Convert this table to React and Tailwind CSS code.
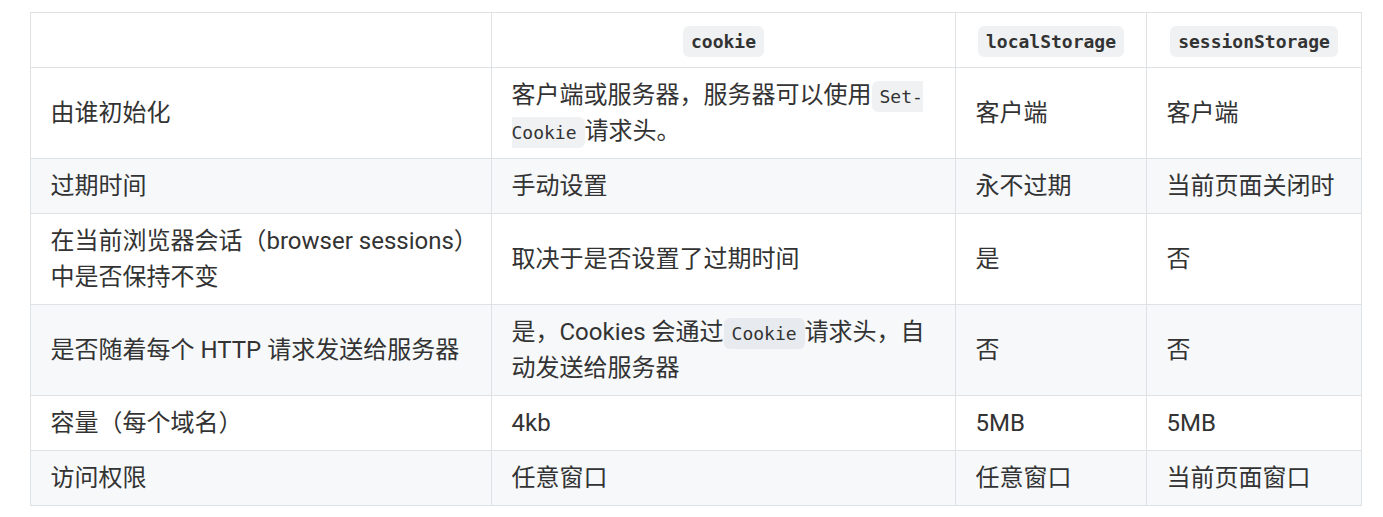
import React from "react";

const C = ({ children, bold }) => (
  <code
    className={`rounded-md bg-[rgba(175,184,193,0.2)] px-[8px] py-[5px] text-[18px] leading-none ${bold ? "font-bold" : "font-normal"}`}
    style={{ fontFamily: '"DejaVu Sans Mono", "Liberation Mono", monospace' }}
  >
    {children}
  </code>
);

const rows = [
  ["由谁初始化", <>客户端或服务器，服务器可以使用<C>Set-Cookie</C>请求头。</>, "客户端", "客户端"],
  ["过期时间", "手动设置", "永不过期", "当前页面关闭时"],
  ["在当前浏览器会话（browser sessions）中是否保持不变", "取决于是否设置了过期时间", "是", "否"],
  ["是否随着每个 HTTP 请求发送给服务器", <>是，Cookies 会通过<C>Cookie</C>请求头，自动发送给服务器</>, "否", "否"],
  ["容量（每个域名）", "4kb", "5MB", "5MB"],
  ["访问权限", "任意窗口", "任意窗口", "当前页面窗口"],
];

export default function App() {
  return (
    <div
      className="bg-white pl-[30px] pt-[12px] text-[24px] leading-[36px] text-[#333]"
      style={{ fontFamily: 'Roboto, "Noto Sans CJK SC", sans-serif', width: 1383, height: 517 }}
    >
      <table className="table-fixed border-collapse w-[1331px]">
        <colgroup>
          <col className="w-[461px]" />
          <col className="w-[464px]" />
          <col className="w-[191px]" />
          <col className="w-[215px]" />
        </colgroup>
        <thead>
          <tr className="bg-white">
            <th className="border border-[#dfe2e5] px-[19.5px] py-[9px] text-center font-semibold"></th>
            <th className="border border-[#dfe2e5] px-[19.5px] py-[9px] text-center font-semibold"><C bold>cookie</C></th>
            <th className="border border-[#dfe2e5] px-[19.5px] py-[9px] text-center font-semibold"><C bold>localStorage</C></th>
            <th className="border border-[#dfe2e5] px-[19.5px] py-[9px] text-center font-semibold"><C bold>sessionStorage</C></th>
          </tr>
        </thead>
        <tbody>
          {rows.map((r, i) => (
            <tr key={i} className={i % 2 === 1 ? "bg-[#f6f8fa]" : "bg-white"}>
              {r.map((c, j) => (
                <td key={j} className="border border-[#dfe2e5] px-[19.5px] py-[9px] align-middle">
                  {c}
                </td>
              ))}
            </tr>
          ))}
        </tbody>
      </table>
    </div>
  );
}
